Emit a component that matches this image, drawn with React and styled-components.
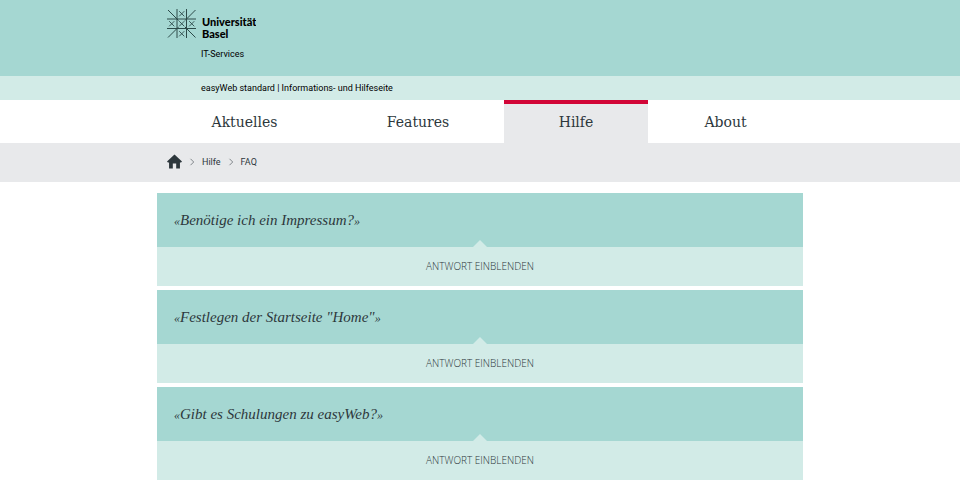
import React, { useState } from 'react'
import styled, { createGlobalStyle } from 'styled-components'

const GlobalStyle = createGlobalStyle`
  * {
    box-sizing: border-box;
  }
  body {
    margin: 0;
    background: #fff;
    color: #2d373c;
    font-family: 'Liberation Sans', Arial, sans-serif;
  }
`;
const Container = styled.div`
  width: 100%;
  max-width: 646px;
  margin: 0 auto;
`;
const Header = styled.header`
  background: #a5d7d2;
  padding: 9px 0 16px;
`;
const Brand = styled.a`
  display: flex;
  align-items: flex-start;
  gap: 6px;
  padding: 0 10px;
  color: #000;
  text-decoration: none;
`;
const BrandName = styled.span`
  padding-top: 7px;
  font-family: Lato, sans-serif;
  font-size: 11px;
  font-weight: 900;
  line-height: 11px;
`;
const BrandLine = styled.span`
  display: block;
  line-height: 12px;
  overflow: hidden;
`;
const Department = styled.p`
  margin: 0;
  padding: 8px 0 0 44px;
  color: #000;
  font-family: Roboto, sans-serif;
  font-size: 9px;
  line-height: 12px;
`;
const SiteBar = styled.div`
  background: #d2ebe7;
`;
const SiteName = styled.p`
  margin: 0;
  padding: 0 0 0 44px;
  color: #000;
  font-family: Roboto, sans-serif;
  font-size: 9px;
  line-height: 24px;
`;
const NavList = styled.ul`
  display: grid;
  grid-template-columns: 175fr 172fr 144fr 155fr;
  margin: 0;
  padding: 0;
  list-style: none;
`;
const NavLink = styled.a`
  display: block;
  border-top: 4px solid ${props => (props.$active ? '#d20537' : 'transparent')};
  background: ${props => (props.$active ? '#e8e9eb' : 'transparent')};
  padding: 6px 0 9px;
  color: #2d373c;
  font-family: 'DejaVu Serif', serif;
  font-size: 14px;
  line-height: 24px;
  text-align: center;
  text-decoration: none;
`;
const BreadcrumbBar = styled.nav`
  background: #e8e9eb;
`;
const Breadcrumbs = styled.ol`
  display: flex;
  align-items: center;
  gap: 7px;
  height: 39px;
  margin: 0;
  padding: 0 10px 2px;
  list-style: none;
`;
const Crumb = styled.li`
  display: flex;
  align-items: center;
  gap: 7px;
`;
const CrumbLink = styled.a`
  display: flex;
  color: #2d373c;
  font-family: Roboto, sans-serif;
  font-size: 9px;
  line-height: 12px;
  text-decoration: none;
`;
const Faq = styled.main`
  display: grid;
  gap: 4px;
  padding: 11px 0 2px;
`;
const Card = styled.section`
  background: #d2ebe7;
`;
const Question = styled.h2`
  margin: 0;
  padding: 14px 17px;
  background: #a5d7d2;
  font-family: 'Liberation Serif', serif;
  font-size: 15px;
  font-style: italic;
  font-weight: 400;
  line-height: 26px;
`;
const Quote = styled.span`
  font-size: 12px;
  line-height: 1;
`;
const Toggle = styled.button`
  position: relative;
  display: block;
  width: 100%;
  border: 0;
  padding: 0;
  background: transparent;
  color: #2d373c;
  font-family: 'Open Sans', sans-serif;
  font-size: 10px;
  font-weight: 300;
  line-height: 39px;
  text-transform: uppercase;
  cursor: pointer;

  &::before {
    content: '';
    position: absolute;
    bottom: 100%;
    left: 50%;
    margin-left: -7px;
    border: 7px solid transparent;
    border-top: 0;
    border-bottom-color: #d2ebe7;
  }
`;
const Answer = styled.p`
  margin: 0;
  padding: 0 17px 14px;
  font-size: 12px;
  line-height: 18px;
`;

const navItems = ['Aktuelles', 'Features', 'Hilfe', 'About'];

const questions = [
  'Benötige ich ein Impressum?',
  'Festlegen der Startseite "Home"',
  'Gibt es Schulungen zu easyWeb?',
];

function Logo() {
  return (
    <svg width="29" height="30" viewBox="0 0 29 30" fill="none" stroke="#2c4a49" aria-hidden="true">
      <path d="M10 0V29M19.5 0V29M0 10H29M0 19.5H29" />
      <path d="M1 1L11.5 11.5M28.5 1L18 11.5M1 28.5L11.5 18M28.5 28.5L18 18" />
      <path
        d="M12.2 2.2L17.3 7.3M17.3 2.2L12.2 7.3M12.2 12.2L17.3 17.3M17.3 12.2L12.2 17.3M12.2 22.2L17.3 27.3M17.3 22.2L12.2 27.3M2.2 12.2L7.3 17.3M7.3 12.2L2.2 17.3M22.2 12.2L27.3 17.3M27.3 12.2L22.2 17.3"
        strokeWidth="0.9"
      />
    </svg>
  )
}

function HomeIcon() {
  return (
    <svg width="15" height="15" viewBox="0 0 16 15" fill="#2d373c" aria-hidden="true">
      <path d="M8 0L16 7.5L15 8.6H13.8V15H9.8V9.5H6.2V15H2.2V8.6H1L0 7.5Z" />
    </svg>
  )
}

function Chevron() {
  return (
    <svg width="6" height="8" viewBox="0 0 6 8" fill="none" stroke="#80868a" aria-hidden="true">
      <path d="M1.5 0.8L4.7 4L1.5 7.2" />
    </svg>
  )
}

function FaqCard({ question }) {
  const [open, setOpen] = useState(false);

  return (
    <Card>
      <Question>
        <Quote>«</Quote>{question}<Quote>»</Quote>
      </Question>
      <Toggle type="button" aria-expanded={open} onClick={() => setOpen(!open)}>
        Antwort {open ? 'ausblenden' : 'einblenden'}
      </Toggle>
      {open && <Answer>{question}</Answer>}
    </Card>
  )
}

function App() {
  return (
    <>
      <GlobalStyle />

      <Header>
        <Container>
          <Brand href="#">
            <Logo />
            <BrandName>
              <BrandLine>Universität</BrandLine>
              <BrandLine>Basel</BrandLine>
            </BrandName>
          </Brand>
          <Department>IT-Services</Department>
        </Container>
      </Header>

      <SiteBar>
        <Container>
          <SiteName>easyWeb standard | Informations- und Hilfeseite</SiteName>
        </Container>
      </SiteBar>

      <Container as="nav">
        <NavList>
          {navItems.map(item => (
            <li key={item}>
              <NavLink href="#" $active={item === 'Hilfe'}>{item}</NavLink>
            </li>
          ))}
        </NavList>
      </Container>

      <BreadcrumbBar>
        <Container>
          <Breadcrumbs>
            <Crumb>
              <CrumbLink href="#" aria-label="Home"><HomeIcon /></CrumbLink>
            </Crumb>
            <Crumb>
              <Chevron />
              <CrumbLink href="#">Hilfe</CrumbLink>
            </Crumb>
            <Crumb>
              <Chevron />
              <CrumbLink href="#">FAQ</CrumbLink>
            </Crumb>
          </Breadcrumbs>
        </Container>
      </BreadcrumbBar>

      <Container>
        <Faq>
          {questions.map(question => (
            <FaqCard key={question} question={question} />
          ))}
        </Faq>
      </Container>
    </>
  )
}

export default App;
